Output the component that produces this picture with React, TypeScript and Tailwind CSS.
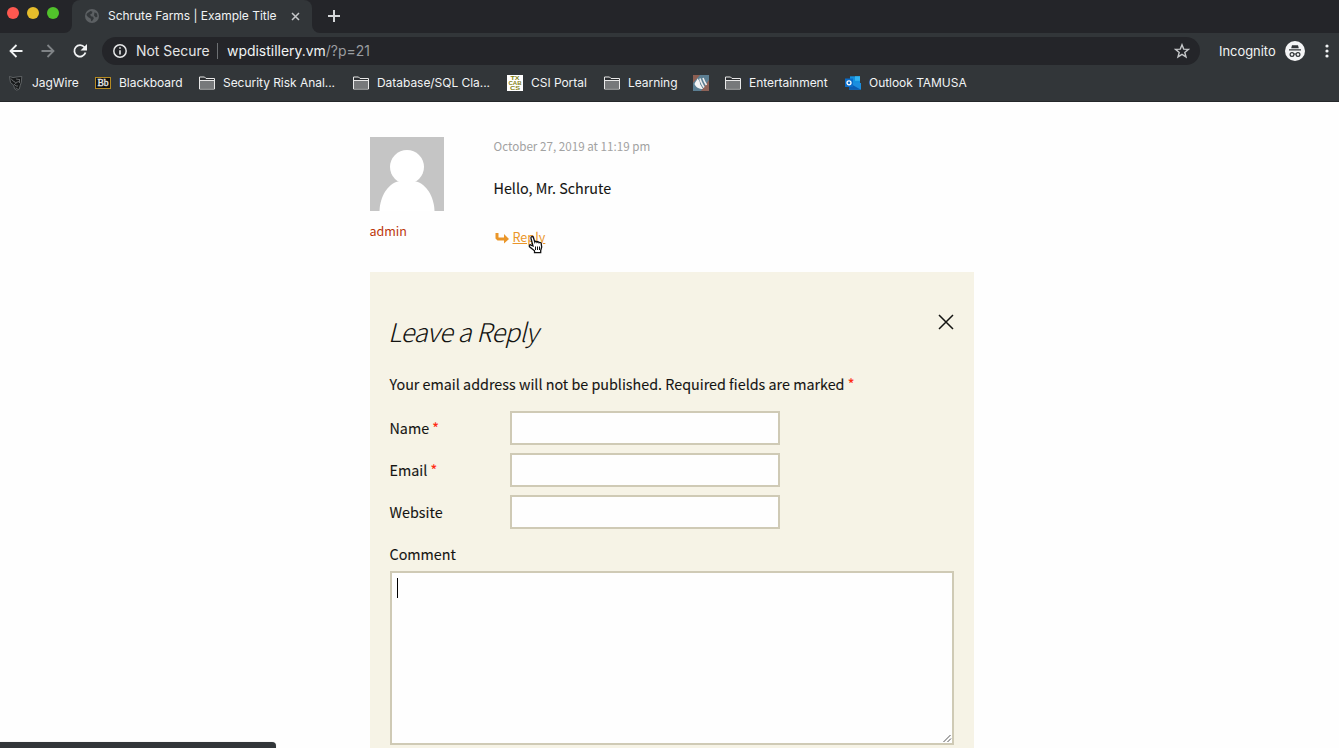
import React from "react";

const sans = "font-['Noto_Sans_CJK_SC','Noto_Sans',sans-serif]";

function Globe() {
  return (
    <svg width="14" height="14" viewBox="0 0 14 14" className="shrink-0">
      <circle cx="7" cy="7" r="7" fill="#5c6063" />
      <path d="M2 4.5 5.5 2l2 .8-.6 1.7-1.8 1L6 7.2l2.2.6.6 1.6-1.8 2.9-1-.2-.2-2.4L3 8 1.400 6zM9.500 3.200l2.400 1.400.6 2.800-1.600 1-1.900-1.800z" fill="#34383b" />
    </svg>
  );
}

function Folder() {
  return (
    <svg width="16" height="14" viewBox="0 0 16 14" className="shrink-0">
      <path d="M.5 13V1h5l1.500 1.500h8.500V13z" fill="#2b2e31" stroke="#e8e8e8" />
      <path d="M1 4h14v8.500H1z" fill="#77797b" />
      <path d="M1 4.500h14" stroke="#e8e8e8" />
    </svg>
  );
}

function Jaguar() {
  return (
    <svg width="16" height="16" viewBox="0 0 16 16" className="shrink-0">
      <path d="M1.500 1.500 5 2.600l5-.8 3.800-.3-.5 5.700-1.200 3.600-.8 3.200-2.600 1.200-2.200-1.500-.8-3.500L2.500 7.500z" fill="#17191a" stroke="#6d7173" strokeWidth=".8" />
      <path d="M3 3.500 5 6l2 1 1 2M8 4l3 .5M8 7.500l3-1M6 9l2 2h2M7.500 13l2 .6M11.500 4v4" fill="none" stroke="#777a7c" strokeWidth=".8" />
    </svg>
  );
}

function Blackboard() {
  return (
    <svg width="16" height="12" viewBox="0 0 16 12" className="shrink-0">
      <rect x=".5" y=".5" width="15" height="11" fill="#111" stroke="#b58a22" />
      <text x="8" y="9.200" textAnchor="middle" fontSize="9.500" fill="#eee" className="font-['Liberation_Serif',serif]" textLength="11" lengthAdjust="spacingAndGlyphs" stroke="#eee" strokeWidth=".3">Bb</text>
    </svg>
  );
}

function Csi() {
  return (
    <svg width="16" height="16" viewBox="0 0 16 16" className="shrink-0 font-['Liberation_Sans',sans-serif]">
      <rect width="16" height="16" fill="#fff" />
      <g fill="#858313" fontSize="6" fontWeight="700" textAnchor="middle">
        <text x="8" y="5" textLength="9" lengthAdjust="spacingAndGlyphs">TX</text>
        <text x="8" y="10.200" textLength="13" lengthAdjust="spacingAndGlyphs">CAB</text>
        <text x="8" y="15.400" textLength="10" lengthAdjust="spacingAndGlyphs">CS</text>
      </g>
    </svg>
  );
}

function Feather() {
  return (
    <svg width="16" height="16" viewBox="0 0 16 16" className="shrink-0">
      <rect width="16" height="16" fill="#5c7f93" />
      <path d="M0 0h7L0 8z" fill="#8d5f52" />
      <path d="M8 16h8V5z" fill="#8d6257" />
      <path d="M4.500 3.500c2 2 2.500 3.500 2.500 5.500l3 5c-4 0-7.500-2-8.500-5 .5-2 2-3 3-5.500z" fill="#f4f4f4" />
      <path d="M7 3.500c.5 3 2 5.500 4 9M10 3c1 3 2.500 5.500 3.500 7" fill="none" stroke="#eee" strokeWidth="1.600" />
    </svg>
  );
}

function Outlook() {
  return (
    <svg width="16" height="16" viewBox="0 0 16 16" className="shrink-0">
      <rect x="5" y="1.300" width="10" height="9" fill="#1490df" />
      <rect x="10" y="1.300" width="5" height="4.500" fill="#32b4f2" />
      <path d="M4 8h12v6.700H4z" fill="#1b8ee0" />
      <path d="m4 8 12 6.700H4z" fill="#0a5db4" />
      <rect y="3.500" width="8" height="8.500" fill="#0a6cc8" />
      <circle cx="4" cy="7.800" r="2" fill="none" stroke="#fff" strokeWidth="1.300" />
    </svg>
  );
}

function Mark({ icon, label, box }: { icon: React.ReactNode; label?: string; box: string }) {
  return (
    <div className={`flex shrink-0 items-center gap-2 whitespace-nowrap ${box}`}>
      {icon}
      {label && <span>{label}</span>}
    </div>
  );
}

function Chrome() {
  return (
    <header className="flex h-[102px] flex-col border-b border-[#24272a] bg-[#323639] font-['Inter',sans-serif] text-[#f1f3f4]">
      <div className="flex h-[33px] bg-[#242529]">
        <div className="flex w-[72px] gap-2 pt-[6.500px] pl-[7px]">
          <i className="size-3 rounded-full bg-[#fe5850]" />
          <i className="size-3 rounded-full bg-[#e6bd2b]" />
          <i className="size-3 rounded-full bg-[#51c22b]" />
        </div>
        <div className="relative flex w-60 items-center rounded-t-lg bg-[#323639] pb-px pl-[13px]">
          <svg width="256" height="8" className="absolute bottom-0 -left-2" viewBox="0 0 256 8">
            <path d="M0 8a8 8 0 0 0 8-8v8zM256 8a8 8 0 0 1-8-8v8z" fill="#323639" />
          </svg>
          <Globe />
          <span className="ml-[9px] w-[183px] text-xs tracking-[-0.03px] whitespace-nowrap">Schrute Farms | Example Title</span>
          <svg width="9" height="9" viewBox="0 0 9 9" className="shrink-0">
            <path d="m1 1 7 7M8 1 1 8" stroke="#c6c8ca" strokeWidth="1.500" />
          </svg>
        </div>
        <svg width="12" height="12" viewBox="0 0 12 12" className="mt-[10px] ml-4">
          <path d="M6 0v12M0 6h12" stroke="#d5d7d9" strokeWidth="2" />
        </svg>
      </div>
      <div className="flex h-9 shrink-0 items-center">
        <svg width="102" height="36" viewBox="0 0 102 36" fill="none" strokeWidth="1.800" className="shrink-0">
          <path d="M22.500 18H10.500M16.500 12l-6 6 6 6" stroke="#f1f3f4" />
          <path d="M41.500 18H53.500M47.500 12l6 6-6 6" stroke="#7f8386" />
          <path d="M84.500 14.300A5.700 5.700 0 1 0 85.500 19.600" stroke="#f1f3f4" />
          <path d="M87 11v6.500h-6.500z" fill="#f1f3f4" />
        </svg>
        <div className="flex h-7 w-[1098px] items-center rounded-full bg-[#242529] pl-[11px]">
          <svg width="14" height="14" viewBox="0 0 14 14" className="shrink-0">
            <circle cx="7" cy="7" r="6.200" fill="none" stroke="#e5e6e7" strokeWidth="1.500" />
            <path d="M7 6.200v4.300M7 3.200v1.600" stroke="#e5e6e7" strokeWidth="1.600" />
          </svg>
          <span className="mt-px ml-[9px] w-[81px] text-[13.900px] whitespace-nowrap text-[#e4e5e6]">Not Secure</span>
          <i className="h-4 w-px bg-[#6d7073]" />
          <span className="mt-px ml-[9px] text-[13.950px] whitespace-nowrap">wpdistillery.vm<span className="text-[#9a9da0]">/?p=21</span></span>
          <svg width="16" height="16" viewBox="0 0 16 16" className="mr-[10px] ml-auto">
            <path d="m8 1.800 1.700 4.300 4.700.3-3.600 3 1.200 4.500-4-2.500-4 2.500 1.200-4.500-3.600-3 4.700-.3z" fill="none" stroke="#c5c7c9" strokeWidth="1.400" />
          </svg>
        </div>
        <span className="mt-px ml-[19px] w-[66px] text-[12.900px] whitespace-nowrap">Incognito</span>
        <svg width="20" height="20" viewBox="0 0 20 20" className="shrink-0">
          <circle cx="10" cy="10" r="10" fill="#f4f5f6" />
          <path d="M7 4.200h6l.8 3H6.200zM4 8.200h12v1.200H4z" fill="#323639" />
          <g fill="none" stroke="#323639" strokeWidth="1.200"><circle cx="7" cy="13.500" r="1.900" /><circle cx="13" cy="13.500" r="1.900" /><path d="M9 13h2" /></g>
        </svg>
        <svg width="4" height="14" viewBox="0 0 4 14" className="ml-5 shrink-0" fill="#f1f3f4">
          <circle cx="2" cy="2" r="1.600" /><circle cx="2" cy="7" r="1.600" /><circle cx="2" cy="12" r="1.600" />
        </svg>
      </div>
      <nav className="flex h-7 shrink-0 items-center pl-2 text-xs tracking-[-0.04px]">
        <Mark box="w-[87px]" icon={<Jaguar />} label="JagWire" />
        <Mark box="w-[104px]" icon={<Blackboard />} label="Blackboard" />
        <Mark box="w-[154px]" icon={<Folder />} label="Security Risk Anal..." />
        <Mark box="w-[154px]" icon={<Folder />} label="Database/SQL Cla..." />
        <Mark box="w-[97px]" icon={<Csi />} label="CSI Portal" />
        <Mark box="w-[89px]" icon={<Folder />} label="Learning" />
        <Mark box="w-[32px]" icon={<Feather />} />
        <Mark box="w-[120px]" icon={<Folder />} label="Entertainment" />
        <Mark box="w-[130px]" icon={<Outlook />} label="Outlook TAMUSA" />
      </nav>
    </header>
  );
}

function Comment() {
  return (
    <article className="flex h-[135px]">
      <div className="w-[123.500px]">
        <svg width="74" height="74" viewBox="0 0 74 74" className="block">
          <rect width="74" height="74" fill="#c5c5c5" />
          <circle cx="37" cy="30" r="17" fill="#fff" />
          <path d="M9.500 74C10 59 18 47 28 44.500h18C56 47 64 59 64.500 74z" fill="#fff" />
        </svg>
        <a className="mt-[10px] -ml-[0.5px] block text-[12.500px] leading-5 text-[#bc360a]">admin</a>
      </div>
      <div className="-mt-px">
        <time className="block text-[11.650px] leading-5 text-[#a2a2a2]">October 27, 2019 at 11:19 pm</time>
        <p className="mt-[21px] text-[14.330px] leading-[22px] [-webkit-text-stroke:0.1px]">Hello, Mr. Schrute</p>
        <div className="relative mt-7 flex items-center gap-[3px] text-[12.600px] leading-5 text-[#ea9629]">
          <svg width="16" height="14" viewBox="0 0 16 14" fill="#ea9629" className="relative top-px">
            <path d="M1.500 2h3v4.500H10V3l5 5-5 4.500V9.500H3.500l-2-2z" />
          </svg>
          <a className="underline">Reply</a>
          <svg width="16" height="19" viewBox="0 0 16 19" className="absolute top-[7.500px] left-[34.500px]">
            <path d="M5 11 3 3.500C2.500 1.500 4.700.8 5.400 2.600L6.800 7c.5-1.200 2-.8 2.200.2.700-.8 1.900-.5 2.100.5.900-.6 2-.2 2.100.9l.5 3.400-1 3.500v2.200H6.500v-1.900L1.500 11.800c-.9-1.500.6-2.600 1.600-1.600z" fill="#fff" stroke="#111" strokeWidth="1.300" />
            <path d="M7.500 11.500V15M9.500 11.500V15M11.500 11.500V15" stroke="#111" />
          </svg>
        </div>
      </div>
    </article>
  );
}

function Field({ label, required }: { label: string; required?: boolean }) {
  return (
    <label className="flex h-[34px] items-center">
      <span className="-ml-[0.5px] w-[120.500px]">{label}{required && <span className="text-[#ff2a13]"> *</span>}</span>
      <input className="h-[34px] w-[270px] border-2 border-[#cfcab5] bg-[#fefefe]" />
    </label>
  );
}

export default function App() {
  return (
    <div className="relative h-[748px] overflow-hidden bg-[#fefefe]">
      <Chrome />
      <main className={`ml-[370px] w-[604px] pt-[35px] text-[#141412] ${sans}`}>
        <Comment />
        <section className="h-[500px] bg-[#f6f3e6] px-5 pt-[39px] text-[14.330px] [-webkit-text-stroke:0.1px]">
          <div className="flex h-10 items-start justify-between">
            <h2 className="-ml-[2px] text-[25.800px] leading-10 font-light tracking-[-0.55px] italic [-webkit-text-stroke:0px]">Leave a Reply</h2>
            <svg width="16" height="16" viewBox="0 0 16 16" className="mt-[3px]">
              <path d="m1 1 14 14M15 1 1 15" stroke="#141412" strokeWidth="1.500" />
            </svg>
          </div>
          <p className="mt-[22px] -ml-[0.5px] leading-[22px] whitespace-nowrap">Your email address will not be published. Required fields are marked <span className="text-[#ff2a13]">*</span></p>
          <form className="mt-4 flex flex-col gap-2">
            <Field label="Name" required />
            <Field label="Email" required />
            <Field label="Website" />
            <label className="-ml-[0.5px] flex h-[34px] items-center">Comment</label>
            <div className="relative -mt-2 flex h-[174px] items-start border-2 border-[#cfcab5] bg-[#fefefe] pt-[5px] pl-[5px]">
              <i className="h-5 w-px bg-black" />
              <svg width="10" height="10" viewBox="0 0 10 10" className="absolute right-0 bottom-0">
                <path d="m1.500 9 7-7M5.500 9 9 5.500" stroke="#555" />
              </svg>
            </div>
          </form>
        </section>
      </main>
      <div className="absolute bottom-0 left-0 h-[6px] w-[276px] rounded-tr-[4px] bg-[#323639] shadow-[0_0_1px_#bbb]" />
    </div>
  );
}
